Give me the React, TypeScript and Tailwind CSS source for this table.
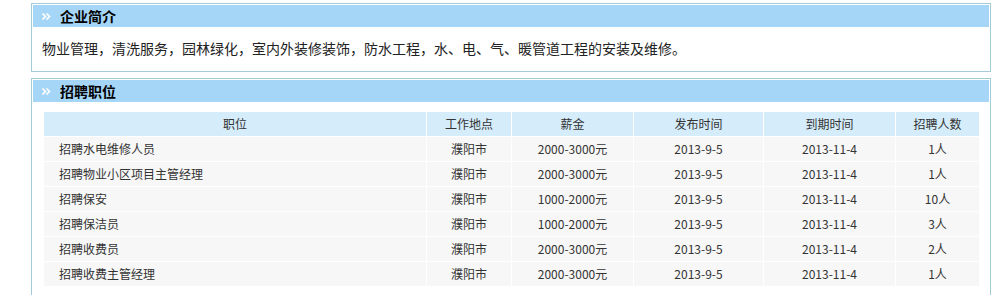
const jobs = [
  { title: "招聘水电维修人员", place: "濮阳市", pay: "2000-3000元", start: "2013-9-5", end: "2013-11-4", count: "1人" },
  { title: "招聘物业小区项目主管经理", place: "濮阳市", pay: "2000-3000元", start: "2013-9-5", end: "2013-11-4", count: "1人" },
  { title: "招聘保安", place: "濮阳市", pay: "1000-2000元", start: "2013-9-5", end: "2013-11-4", count: "10人" },
  { title: "招聘保洁员", place: "濮阳市", pay: "1000-2000元", start: "2013-9-5", end: "2013-11-4", count: "3人" },
  { title: "招聘收费员", place: "濮阳市", pay: "2000-3000元", start: "2013-9-5", end: "2013-11-4", count: "2人" },
  { title: "招聘收费主管经理", place: "濮阳市", pay: "2000-3000元", start: "2013-9-5", end: "2013-11-4", count: "1人" },
];

function Arrow() {
  return (
    <svg width="9" height="7" viewBox="0 0 9 7" className="shrink-0">
      <path d="M0.5 0.5l3 3-3 3M4.5 0.5l3 3-3 3" fill="none" stroke="#ffffff" strokeWidth="1.6" />
    </svg>
  );
}

function BoxHeader({ title }: { title: string }) {
  return (
    <div className="h-[22px] bg-[#a6d6f7] flex items-center pl-[9px]">
      <Arrow />
      <span className="ml-[9px] text-[14px] font-bold text-black leading-none">{title}</span>
    </div>
  );
}

export default function App() {
  return (
    <div
      className="w-[999px] h-[295px] overflow-hidden bg-white pt-[3px] pl-[31px]"
      style={{ fontFamily: '"Noto Sans CJK SC", "Noto Sans", sans-serif' }}
    >
      <div className="w-[960px] border border-[#a3cbd8] p-px">
        <BoxHeader title="企业简介" />
        <div className="h-[43px] flex items-center pl-[9px] text-[14px] text-[#222]">
          物业管理，清洗服务，园林绿化，室内外装修装饰，防水工程，水、电、气、暖管道工程的安装及维修。
        </div>
      </div>

      <div className="w-[960px] mt-[6px] border border-[#a3cbd8] p-px pb-[40px]">
        <BoxHeader title="招聘职位" />
        <div className="pl-[10px] pt-[9px]">
          <table className="border-separate border-spacing-px text-[12px] leading-none text-[#333]">
            <thead>
              <tr className="h-[24px]">
                <th className="w-[382px] bg-[#d5ecfb] font-normal">职位</th>
                <th className="w-[84px] bg-[#d5ecfb] font-normal">工作地点</th>
                <th className="w-[121px] bg-[#d5ecfb] font-normal">薪金</th>
                <th className="w-[129px] bg-[#d5ecfb] font-normal">发布时间</th>
                <th className="w-[131px] bg-[#d5ecfb] font-normal">到期时间</th>
                <th className="w-[83px] bg-[#d5ecfb] font-normal">招聘人数</th>
              </tr>
            </thead>
            <tbody>
              {jobs.map((j) => (
                <tr key={j.title} className="h-[24px]">
                  <td className="bg-[#f7f7f7] pl-[15px]">{j.title}</td>
                  <td className="bg-[#f7f7f7] text-center">{j.place}</td>
                  <td className="bg-[#f7f7f7] text-center">{j.pay}</td>
                  <td className="bg-[#f7f7f7] text-center">{j.start}</td>
                  <td className="bg-[#f7f7f7] text-center">{j.end}</td>
                  <td className="bg-[#f7f7f7] text-center">{j.count}</td>
                </tr>
              ))}
            </tbody>
          </table>
        </div>
      </div>
    </div>
  );
}
